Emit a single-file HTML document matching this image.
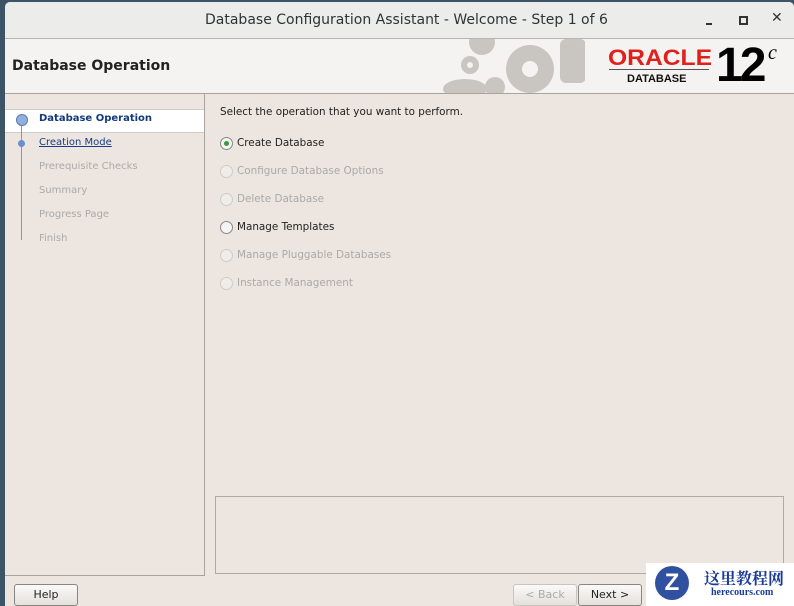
<!DOCTYPE html>
<html><head><style>
body{margin:0;width:794px;height:606px;overflow:hidden;background:#3d5366;font-family:"DejaVu Sans","Liberation Sans",sans-serif;position:relative}
.win{position:absolute;left:5px;top:2px;width:789px;height:604px;background:#ede5df;border-radius:5px 5px 0 0}
.title{position:absolute;left:0;top:0;width:789px;height:36px;background:#ececeb;border-bottom:1px solid #b8b4b0;border-radius:5px 5px 0 0}
.title span{position:absolute;left:200px;top:10px;font-size:14px;color:#2e3436}
.hdr{position:absolute;left:0;top:37px;width:789px;height:54px;background:#f5f3f1;border-bottom:1px solid #a9a39e}
.hdr .t{position:absolute;left:7px;top:19px;font-size:14px;font-weight:bold;color:#222}
.left{position:absolute;left:0;top:92px;width:199px;height:481px;border-right:1px solid #a9a39e;border-bottom:1px solid #a9a39e}
.step{position:absolute;left:34px;font-size:10px;color:#aaa}
.sel{position:absolute;left:0;top:15px;width:199px;height:22px;background:#fff;border-top:1px solid #ccc;border-bottom:1px solid #ccc}
.r{position:absolute;left:215px;font-size:10.4px;color:#222}
.r i{position:absolute;left:0;top:0;width:11px;height:11px;border:1px solid #888;border-radius:50%;background:#f4f4f4}
.r span{position:absolute;left:17px;top:0;white-space:nowrap}
.dis{color:#aaa}.dis i{border-color:#ccc;background:#f0ece8}
.btn{position:absolute;top:582px;height:20px;border:1px solid #8a8580;border-radius:3px;background:linear-gradient(#fafafa,#e4e0dc);font-size:11px;text-align:center;line-height:20px;color:#222}
</style></head><body>
<div class="win">
<div class="title"><span>Database Configuration Assistant - Welcome - Step 1 of 6</span>
<div style="position:absolute;left:701px;top:21px;width:6px;height:2px;background:#333"></div>
<div style="position:absolute;left:734px;top:14px;width:5px;height:5px;border:2px solid #333"></div>
<div style="position:absolute;left:766px;top:8px;font-size:14px;color:#333;font-weight:bold">✕</div></div>
<div class="hdr"><div class="t">Database Operation</div>
<svg style="position:absolute;left:430px;top:0" width="150" height="54"><g fill="#c9c5c1"><circle cx="47" cy="3" r="13"/><circle cx="95" cy="30" r="24"/><circle cx="35" cy="26" r="9"/><rect x="125" y="0" width="26" height="44" rx="6"/><ellipse cx="30" cy="50" rx="22" ry="10"/><circle cx="60" cy="48" r="10"/></g><circle cx="95" cy="30" r="8" fill="#f5f3f1"/><circle cx="35" cy="26" r="3" fill="#f5f3f1"/></svg>
<div style="position:absolute;left:603px;top:6px;font:bold 22px 'Liberation Sans',sans-serif;color:#e0201b;transform:scaleX(1.12);transform-origin:left">ORACLE</div>
<div style="position:absolute;left:604px;top:30px;width:100px;height:1px;background:#555"></div>
<div style="position:absolute;left:622px;top:34px;font:bold 11px 'Liberation Sans',sans-serif;color:#111">DATABASE</div>
<div style="position:absolute;left:711px;top:-1px;font:bold 48px 'Liberation Sans',sans-serif;color:#000;letter-spacing:-3px">12</div>
<div style="position:absolute;left:763px;top:3px;font:italic 20px 'Liberation Serif',serif;color:#000">c</div>
</div>
<div class="left">
<div class="sel"></div>
<div style="position:absolute;left:16px;top:26px;width:1px;height:120px;background:#8898b0"></div>
<div style="position:absolute;left:11px;top:20px;width:10px;height:10px;border-radius:50%;background:#8fb0e0;border:1px solid #5a7ab0"></div>
<div style="position:absolute;left:13px;top:46px;width:7px;height:7px;border-radius:50%;background:#6a8fd0"></div>
<div class="step" style="top:19px;color:#123a7a;font-weight:bold">Database Operation</div>
<div class="step" style="top:43px;color:#1a3a8a;text-decoration:underline">Creation Mode</div>
<div class="step" style="top:67px">Prerequisite Checks</div>
<div class="step" style="top:91px">Summary</div>
<div class="step" style="top:115px">Progress Page</div>
<div class="step" style="top:139px">Finish</div>
</div>
<div class="r" style="top:104px">Select the operation that you want to perform.</div>
<div class="r" style="top:135px"><i><b style="position:absolute;left:3px;top:3px;width:5px;height:5px;border-radius:50%;background:#3a9a3a"></b></i><span>Create Database</span></div>
<div class="r dis" style="top:163px"><i></i><span>Configure Database Options</span></div>
<div class="r dis" style="top:191px"><i></i><span>Delete Database</span></div>
<div class="r" style="top:219px"><i></i><span>Manage Templates</span></div>
<div class="r dis" style="top:247px"><i></i><span>Manage Pluggable Databases</span></div>
<div class="r dis" style="top:275px"><i></i><span>Instance Management</span></div>
<div style="position:absolute;left:210px;top:494px;width:567px;height:76px;border:1px solid #b0aaa5"></div>
<div class="btn" style="left:9px;width:62px">Help</div>
<div class="btn" style="left:508px;width:62px;color:#aaa;border-color:#c8c4c0">&lt; Back</div>
<div class="btn" style="left:573px;width:62px">Next &gt;</div>
</div>
<div style="position:absolute;left:646px;top:563px;width:148px;height:43px;background:#fff"></div>
<div style="position:absolute;left:655px;top:566px;width:34px;height:34px;border-radius:50%;background:#3050a0;color:#fff;font:bold 24px 'Liberation Sans';text-align:center;line-height:34px">Z</div>
<div style="position:absolute;left:704px;top:566px;font:bold 16px 'Noto Serif CJK SC',serif;color:#1a3a9a">这里教程网</div>
<div style="position:absolute;left:711px;top:587px;font:bold 10px 'Liberation Serif',serif;color:#1a3a9a">herecours.com</div>
</body></html>
